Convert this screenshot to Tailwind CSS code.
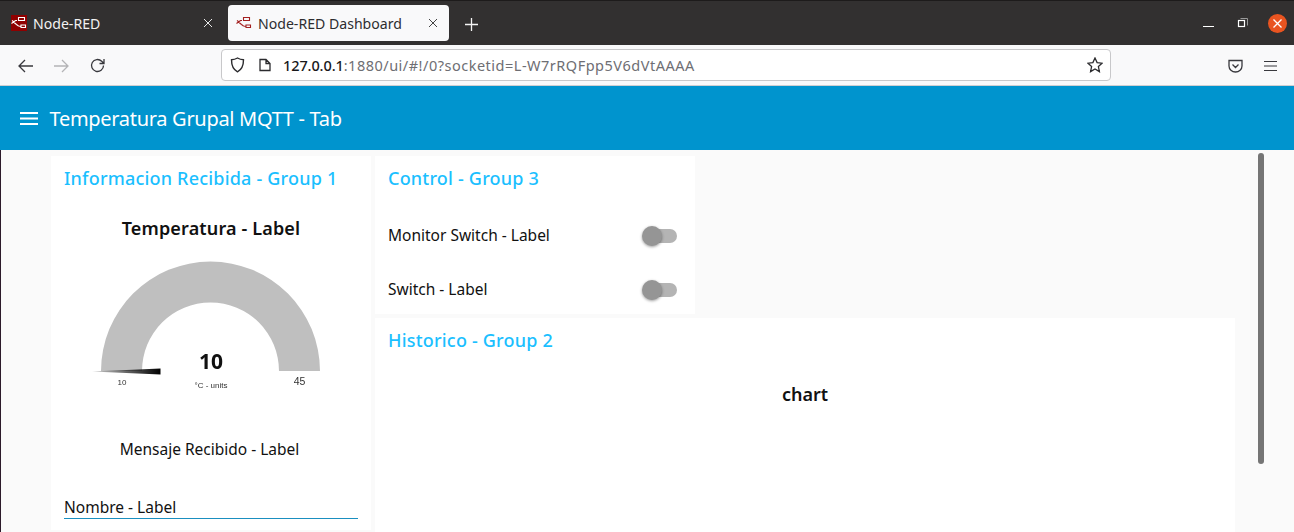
<!DOCTYPE html>
<html lang="en">
<head>
  <meta charset="UTF-8">
  <title>Node-RED Dashboard</title>
  <script src="https://cdn.jsdelivr.net/npm/@tailwindcss/browser@4"></script>
</head>
<body class="w-[1294px] h-[532px] overflow-hidden bg-[#fafafa] font-['Noto_Sans',sans-serif]">
  <!-- tab strip -->
  <div class="h-[45px] bg-[#323030] flex items-start pl-[1px] border-t border-[#1d1b1b] text-[14.100px]">
    <div class="w-[227px] h-[44px] flex items-center text-[#f2f2f2] pl-[10px] pr-[15px] pb-[1px]">
      <div class="w-4 h-4 bg-[#8f0000] flex items-center justify-center shrink-0">
        <svg width="16" height="16" viewBox="0 0 16 16" fill="none" stroke="#fff" stroke-width="1.100"><path d="M.5 8.500l2-1.500 2-1.500h1.500M2.500 7l3 2.500 2 1.500M1 5.500l2 1.500M7.500 2.500h6v3h-6zM10 10h4.500v2.500H10zM7.500 11l2.500.5"/></svg>
      </div>
      <span class="ml-[6px] flex-1 pt-[2px]">Node-RED</span>
      <svg width="10" height="10" viewBox="0 0 10 10" stroke="#e8e8e8" stroke-width="1"><path d="M1 1l8 8M9 1l-8 8"/></svg>
    </div>
    <div class="w-[221px] h-[36px] mt-[4px] bg-[#f9f9fa] rounded-[4px] flex items-center text-[#2d2d30] pl-[8px] pr-[11px]">
      <svg class="shrink-0" width="16" height="16" viewBox="0 0 16 16" fill="none" stroke="#a32020" stroke-width="1.100"><path d="M.5 8.500l2-1.500 2-1.500h1.500M2.500 7l3 2.500 2 1.500M1 5.500l2 1.500M7.500 2.500h6v3h-6zM10 10h4.500v2.500H10zM7.500 11l2.500.5"/></svg>
      <span class="ml-[6px] flex-1 pt-[2px]">Node-RED Dashboard</span>
      <svg width="10" height="10" viewBox="0 0 10 10" stroke="#444" stroke-width="1"><path d="M1 1l8 8M9 1l-8 8"/></svg>
    </div>
    <svg class="ml-[16px] mt-[17px]" width="13" height="13" viewBox="0 0 13 13" stroke="#f4f4f4" stroke-width="1.300"><path d="M6.500 0v13M0 6.500h13"/></svg>
    <div class="ml-auto flex items-center h-[44px] pr-[7px]">
      <div class="w-[11px] h-[1.500px] bg-white mt-[7px]"></div>
      <svg class="ml-[23px] -mt-[1px]" width="12" height="12" viewBox="0 0 12 12" fill="none" stroke="#fff"><path d="M3.500 1.500h7v7" stroke="#999"/><rect x="1.500" y="3.500" width="6" height="6" stroke-width="1.200"/></svg>
      <div class="ml-[19px] w-[19px] h-[19px] rounded-full bg-[#e95420] flex items-center justify-center">
        <svg width="9" height="9" viewBox="0 0 9 9" stroke="#fff" stroke-width="1.300"><path d="M.5.500l8 8M8.500.500l-8 8"/></svg>
      </div>
    </div>
  </div>

  <!-- toolbar -->
  <div class="h-[41px] pt-[1px] bg-[#f9f9fa] border-b border-[#cfcfd2] flex items-center text-[#38383d]">
    <svg class="ml-[18px]" width="15" height="14" viewBox="0 0 15 14" fill="none" stroke="#38383d" stroke-width="1.300"><path d="M15 7H1M7 1L1 7l6 6"/></svg>
    <svg class="ml-[21px]" width="15" height="14" viewBox="0 0 15 14" fill="none" stroke="#b4b4b6" stroke-width="1.300"><path d="M0 7h14M8 1l6 6-6 6"/></svg>
    <svg class="ml-[21px]" width="15" height="15" viewBox="0 0 15 15" fill="none" stroke="#38383d" stroke-width="1.300"><path d="M13.500 7.500a6 6 0 1 1-1.800-4.300L14 5.500M14 1v4.500H9.500"/></svg>
    <div class="ml-[116px] w-[890px] h-[32px] -mt-[1px] bg-white border border-[#c8c8ca] rounded-[4px] flex items-center text-[14.500px] tracking-[-0.1px]">
      <svg class="ml-[8px]" width="15" height="16" viewBox="0 0 15 16" fill="none" stroke="#2b2b2e" stroke-width="1.400"><path d="M7.500 1c2 1.200 4 1.700 6 1.800 0 5.500-2 10-6 12-4-2-6-6.500-6-12 2-.1 4-.6 6-1.800z"/></svg>
      <svg class="ml-[14px]" width="12" height="14" viewBox="0 0 12 14" fill="none" stroke="#2b2b2e" stroke-width="1.300"><path d="M1 1.500h6l4 4v7H1zM7 1.500v4h4"/></svg>
      <span class="ml-[12px] pt-[2px] text-[#18181a] font-medium">127.0.0.1<span class="text-[#6e6e73] font-normal tracking-[0.5px]">:1880/ui/#!/0?socketid=L-W7rRQFpp5V6dVtAAAA</span></span>
      <svg class="ml-auto mr-[7px]" width="16" height="16" viewBox="0 0 16 16" fill="none" stroke="#2b2b2e" stroke-width="1.300"><path d="M8 1l2.100 4.600 5 .6-3.700 3.400 1 5L8 11.900l-4.400 2.700 1-5L.9 6.200l5-.6z"/></svg>
    </div>
    <svg class="ml-[117px]" width="15" height="14" viewBox="0 0 15 14" fill="none" stroke="#38383d" stroke-width="1.300"><path d="M1 1.500h13v5.500a6.500 6 0 0 1-13 0zM4.500 5.500l3 3 3-3"/></svg>
    <svg class="ml-[21px]" width="13" height="12" viewBox="0 0 13 12" stroke="#38383d" stroke-width="1.200"><path d="M0 1.500h13M0 6h13M0 10.500h13"/></svg>
  </div>

  <!-- dashboard header -->
  <header class="h-[64px] pt-[1px] bg-[#0094ce] flex items-center pl-[20px] text-white">
    <svg width="18" height="13" viewBox="0 0 18 13" stroke="#fff" stroke-width="2"><path d="M0 1h18M0 6.500h18M0 12h18"/></svg>
    <h1 class="ml-[11.500px] pt-[1px] text-[20px] tracking-[-0.3px]">Temperatura Grupal MQTT - Tab</h1>
  </header>

  <main class="relative flex gap-[4px] h-[382px] overflow-hidden pt-[6px] pl-[51px] border-l border-[#2c1a2a] text-[#111]">
    <!-- group 1 -->
    <section class="w-[320px] h-[374px] bg-white px-[13px] shrink-0 -ml-[1px]">
      <h2 class="text-[#1bbfff] text-[18px] font-medium mt-[10px] leading-[25px] tracking-[0.2px]">Informacion Recibida - Group 1</h2>
      <p class="text-center text-[18px] font-semibold leading-[24px] mt-[25px] tracking-[0.15px]">Temperatura - Label</p>
      <svg class="-ml-[13px] mt-[10px]" width="320" height="150" viewBox="51 250 320 150">
        <defs>
          <linearGradient id="needle" x1="0" x2="1" y1="0" y2="0"><stop offset="0" stop-color="#000" stop-opacity="0.2"/><stop offset="1" stop-color="#000"/></linearGradient>
        </defs>
        <path d="M101 371a109.500 109.500 0 0 1 219 0h-41a68.500 68.500 0 0 0-137 0z" fill="#bfbfbf"/>
        <path d="M92 371.500l68.500-3v6z" fill="url(#needle)"/>
        <g class="blur-[0.3px]">
          <text x="211" y="369" text-anchor="middle" font-size="21" font-weight="700" fill="#111">10</text>
          <text x="211" y="388" text-anchor="middle" font-size="8" fill="#333" font-family="Liberation Sans">°C - units</text>
          <text x="122" y="385" text-anchor="middle" font-size="8" fill="#333" font-family="Liberation Sans">10</text>
          <text x="299.500" y="385" text-anchor="middle" font-size="10.500" fill="#333" font-family="Liberation Sans">45</text>
        </g>
      </svg>
      <p class="text-center text-[15.500px] leading-[22px] mt-[38px] pr-[3px]">Mensaje Recibido - Label</p>
      <div class="mt-[35px] h-[24px] border-b border-[#1a8fc0] text-[15.500px] leading-[24px]">Nombre - Label</div>
    </section>

    <div class="w-[860px] shrink-0 flex flex-col gap-[4px]">
      <!-- group 3 -->
      <section class="w-[320px] h-[158px] bg-white px-[13px] pt-[10px] shrink-0">
        <h2 class="text-[#1bbfff] text-[18px] font-medium leading-[25px] tracking-[0.2px]">Control - Group 3</h2>
        <div class="flex items-center justify-between h-[24px] mt-[33px] text-[15.500px] pr-[5px]">
          <span>Monitor Switch - Label</span>
          <span class="relative block w-[34px] h-[14px] rounded-full bg-[#b4b4b4]"><span class="absolute -left-[1px] -top-[3px] w-[20px] h-[20px] rounded-full bg-[#959595] shadow-[0_1px_3px_rgba(0,0,0,0.4)]"></span></span>
        </div>
        <div class="flex items-center justify-between h-[24px] mt-[30px] text-[15.500px] pr-[5px]">
          <span>Switch - Label</span>
          <span class="relative block w-[34px] h-[14px] rounded-full bg-[#b4b4b4]"><span class="absolute -left-[1px] -top-[3px] w-[20px] h-[20px] rounded-full bg-[#959595] shadow-[0_1px_3px_rgba(0,0,0,0.4)]"></span></span>
        </div>
      </section>
      <!-- group 2 -->
      <section class="flex-1 bg-white px-[13px] pt-[10px]">
        <h2 class="text-[#1bbfff] text-[18px] font-medium leading-[25px] tracking-[0.2px]">Historico - Group 2</h2>
        <p class="text-center text-[18px] font-semibold leading-[24px] mt-[29px]">chart</p>
      </section>
    </div>

    <!-- scrollbar -->
    <div class="absolute right-[30px] top-[3px] w-[6px] h-[311px] rounded-full bg-[#757575]"></div>
  </main>
</body>
</html>
